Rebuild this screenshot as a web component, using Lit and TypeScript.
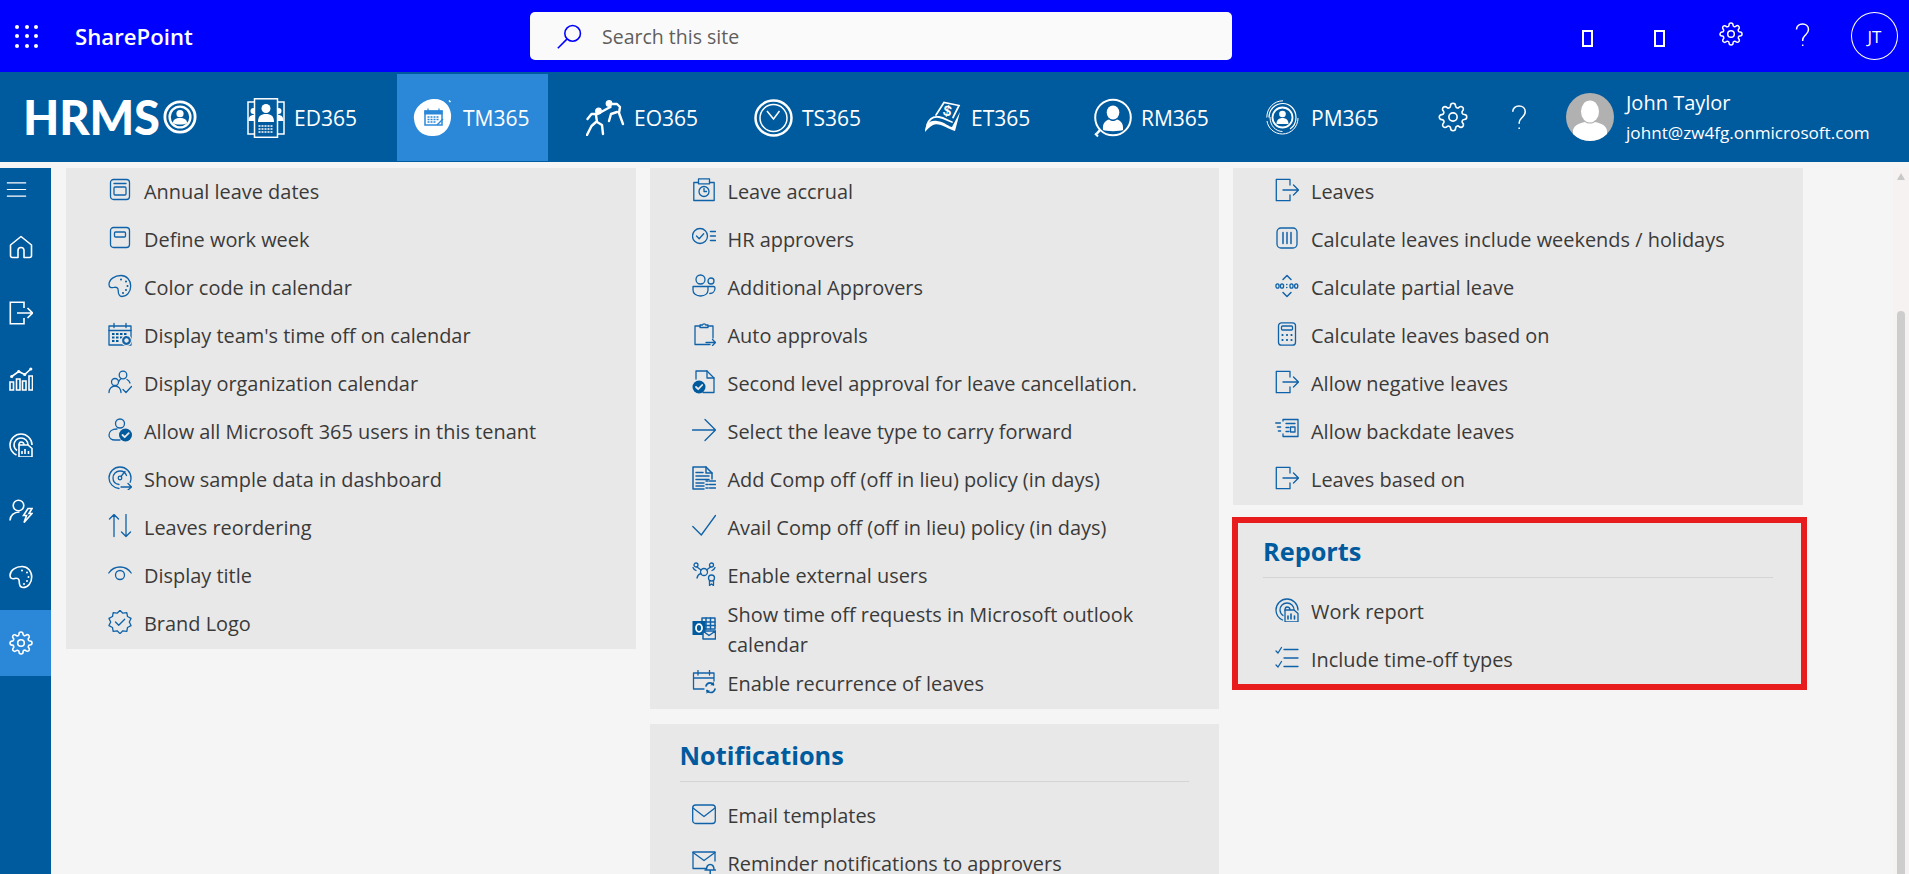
import { LitElement, html, css, svg } from "lit";
import { customElement } from "lit/decorators.js";

const GEAR = "M19.4 15a1.65 1.65 0 0 0 .33 1.82l.06.06a2 2 0 0 1 0 2.83 2 2 0 0 1-2.83 0l-.06-.06a1.65 1.65 0 0 0-1.82-.33 1.65 1.65 0 0 0-1 1.51V21a2 2 0 0 1-2 2 2 2 0 0 1-2-2v-.09A1.65 1.65 0 0 0 9 19.4a1.65 1.65 0 0 0-1.82.33l-.06.06a2 2 0 0 1-2.83 0 2 2 0 0 1 0-2.83l.06-.06a1.65 1.65 0 0 0 .33-1.82 1.65 1.65 0 0 0-1.51-1H3a2 2 0 0 1-2-2 2 2 0 0 1 2-2h.09A1.65 1.65 0 0 0 4.6 9a1.65 1.65 0 0 0-.33-1.82l-.06-.06a2 2 0 0 1 0-2.83 2 2 0 0 1 2.83 0l.06.06a1.65 1.65 0 0 0 1.82.33H9a1.65 1.65 0 0 0 1-1.51V3a2 2 0 0 1 2-2 2 2 0 0 1 2 2v.09a1.65 1.65 0 0 0 1 1.51 1.65 1.65 0 0 0 1.82-.33l.06-.06a2 2 0 0 1 2.83 0 2 2 0 0 1 0 2.83l-.06.06a1.65 1.65 0 0 0-.33 1.82V9a1.65 1.65 0 0 0 1.51 1H21a2 2 0 0 1 2 2 2 2 0 0 1-2 2h-.09a1.65 1.65 0 0 0-1.51 1z";
const PALETTE = "M13 1.5C6.5 1.5 1 5.5 1 10.5c0 3 2.5 3.6 4.6 3 2.6-.7 4.6.2 4.6 2.8 0 3.2.6 6.2 3.8 6.2 5 0 8.7-4.7 8.7-10.5C22.700 6 18.500 1.500 13 1.500z";

const badgePath = (() => {
  const pts: string[] = [];
  const n = 10;
  for (let i = 0; i < n * 2; i++) {
    const r = i % 2 ? 9.3 : 11.6;
    const a = (Math.PI * i) / n - Math.PI / 2;
    pts.push(`${(12 + r * Math.cos(a)).toFixed(2)} ${(12 + r * Math.sin(a)).toFixed(2)}`);
  }
  return "M" + pts.join("L") + "z";
})();

const ICONS: Record<string, any> = {
  annual: svg`<rect x="2.500" y="1.500" width="19" height="20" rx="3"/><path d="M6 5.500h12"/><rect x="6" y="9" width="12" height="8" rx="1"/>`,
  workweek: svg`<rect x="2.500" y="1.500" width="19" height="20" rx="3"/><rect x="6.500" y="6" width="11" height="5" rx="1"/>`,
  palette: svg`<path d="${PALETTE}"/><g class="f"><circle cx="13" cy="5.500" r="1"/><circle cx="18" cy="7.500" r="1"/><circle cx="19.500" cy="12" r="1"/><circle cx="18" cy="16" r="1"/><circle cx="15" cy="19" r="1"/></g>`,
  teamcal: svg`<path d="M1 4H23V23H1z"/><path d="M1 8.500h22M6 1.500v4M18 1.500v4"/><g class="f"><rect x="4" y="11" width="2.500" height="2"/><rect x="8" y="11" width="2.500" height="2"/><rect x="12" y="11" width="2.500" height="2"/><rect x="16" y="11" width="2.500" height="2"/><rect x="4" y="14.500" width="2.500" height="2"/><rect x="8" y="14.500" width="2.500" height="2"/><rect x="12" y="14.500" width="2.500" height="2"/><rect x="4" y="18" width="2.500" height="2"/><rect x="8" y="18" width="2.500" height="2"/></g><circle cx="18.500" cy="18.500" r="5.500" class="bgf" stroke="none"/><circle cx="18.500" cy="18.500" r="3.300" stroke-width="2.200" stroke-dasharray="1.800 .8"/>`,
  orgcal: svg`<circle cx="15" cy="5" r="3.800"/><path d="M12.800 9c-1 .6-1.500 1.500-1.800 2.300"/><circle cx="7" cy="12" r="3.500"/><path d="M1 22.500c0-3.500 2.500-6.500 6-6.500s6 3 6 6.500"/><path d="M15 19.500l3 3 5.500-6"/><path d="M19 9.500c1.500.7 2.500 2 3 3.500"/>`,
  allow365: svg`<circle cx="12" cy="5.500" r="4.500"/><path d="M9 11C4 11 1 13.500 1 17c0 3 2.500 5 6 5h5"/><circle cx="17.500" cy="17" r="6.500" class="f" stroke="none"/><path d="M14.500 17l2.200 2.200 4-4" stroke="#e8e8e8" stroke-width="1.800"/>`,
  gauge: svg`<path d="M11 22.500C5.500 22 1 17.500 1 12 1 6 6 1 12 1s11 5 11 11c0 1.500-.3 3-.8 4.300"/><path d="M11 18.500C7.500 18 5 15.500 5 12c0-4 3-7 7-7 3 0 5.500 1.800 6.500 4.500"/><circle cx="12" cy="12" r="1.800"/><path d="M13 10.500l4-5"/><path d="M13 21h10.500M20 17.500l3.500 3.500-3.500 3"/>`,
  reorder: svg`<path d="M6 22.500V.5M1.500 5L6 .5 10.500 5M18 .5v22M13.500 18l4.500 4.500 4.500-4.500"/>`,
  eye: svg`<path d="M.8 11C3.500 7 7.500 5 12 5s8.500 2 11.200 6"/><circle cx="12" cy="13" r="4.500"/>`,
  brand: svg`<path d="${badgePath}" stroke-linejoin="round"/><path d="M7.500 12l3.200 3.200 6-6"/>`,
  accrual: svg`<path d="M6.500 4.500H1.800v18h20.400v-18H17.500"/><rect x="6.500" y=".8" width="11" height="5"/><circle cx="12" cy="13.500" r="5"/><path d="M12 10.500v3h2.500"/>`,
  hr: svg`<circle cx="8" cy="10" r="7.500"/><path d="M4.500 10l2.700 2.700 4.500-5"/><path d="M18.500 5.500h5M18.500 10h5M18.500 14.500h5" stroke-width="1.500"/>`,
  additional: svg`<circle cx="8.500" cy="5.500" r="4.500"/><circle cx="19" cy="7" r="3"/><path d="M1 12.500h15v3.500c0 3.500-3 6-7.500 6S1 19.500 1 16z"/><path d="M16 12.500h5.500c1 0 1.500.5 1.500 1.500 0 3-2 5.500-5.200 5.500"/>`,
  auto: svg`<path d="M8 4H3v18.500h15"/><path d="M16 4h5v12"/><path d="M8 5.500V3h2.500c.2-1.500 3-1.500 3.200 0H16v2.500z"/><path d="M14 20.500h9.500M20.500 17.500l3 3-3 3"/>`,
  second: svg`<path d="M4 9V1h11l7 7v14.500H11"/><path d="M15 1v7h7"/><circle cx="7" cy="17" r="6.500" class="f" stroke="none"/><path d="M4 17l2.200 2.200 4-4.200" stroke="#e8e8e8" stroke-width="1.800"/>`,
  arrow: svg`<path d="M.5 12h23M13 1.500L23.500 12 13 22.500"/>`,
  addcomp: svg`<path d="M1 1h13l6 6v6M12 23H1V1" stroke-width="1.500"/><path d="M14 1v6h6M4 6.500h7M4 10h13M4 13.500h13M4 17h8M4 20h8" stroke-width="1.500"/><path d="M14 15h2M14 18.500h2M14 22h2M17.500 15h6M17.500 18.500h6M17.500 22h6" stroke-width="1.500"/>`,
  check: svg`<path d="M.8 12.500L9.300 21 23.500 1.500"/>`,
  external: svg`<circle cx="4" cy="3" r="2"/><circle cx="19.500" cy="3" r="2"/><circle cx="12" cy="10" r="3.500"/><path d="M5 5l4 3M18.500 5l-4 3M5 16c.5-2.500 2-4 4-4.500M1 5.500c.5 1.500 1.500 2.500 3 3M23 5.500c-.5 1.500-1.500 2.500-3 3"/><circle cx="19.500" cy="16" r="3"/><path d="M17.500 19v4.500l2-1.500 2 1.500V19"/>`,
  outlook: svg`<path d="M10 2h13v11H10z" stroke-width="1.500"/><path d="M10 6h13M10 9.500h13M14 2v11M18.500 2v11" stroke-width="1.500"/><rect x=".5" y="5" width="13" height="14" class="f" stroke="none"/><ellipse cx="7" cy="12" rx="3" ry="3.800" stroke="#fff" stroke-width="1.800"/><path d="M11 15h12.500v8H11zM11 15l6 4.500 6.500-4.500" class="bgf" stroke-width="1.500"/>`,
  recur: svg`<path d="M12 19H1.500V3h20.500v8M1.500 8H22M6 .5V5M17.500 .5V5"/><path d="M14 16c.5-2 2-3.200 4-3.200 1.500 0 2.700.7 3.500 2M23 19c-.5 2-2.500 3.500-4.500 3.500-1.500 0-2.800-.7-3.500-2" stroke-width="1.700"/><path d="M21.800 11.800v3.400h-3.400zM14.500 23.800v-3.400h3.400z" class="f" stroke="none"/>`,
  email: svg`<rect x=".7" y="3" width="22.600" height="18.500" rx="3"/><path d="M1 6l11 8.500L23 6"/>`,
  reminder: svg`<path d="M14 18.500H1V2h22v9"/><path d="M1 2.500l11 8 11-8"/><path d="M14.500 20c0-3.500 1.500-5.500 3.700-5.500S22 16.500 22 20zM13 20h10.500M18.200 20.500v3" stroke-width="1.500"/>`,
  exit: svg`<path d="M15 7V1.300H1.300v21.400H15V17"/><path d="M8 12h15.500M18.500 7l5 5-5 5"/>`,
  columns: svg`<rect x="2" y="2" width="20" height="20" rx="4"/><path d="M8 6.500v11M12 6.500v11M16 6.500v11" stroke-width="1.500"/>`,
  partial: svg`<path d="M8 5.500l4-4 4 4M8 18.500l4 4 4-4" stroke-width="1.500"/><ellipse cx="2.500" cy="12" rx="1.600" ry="2.200"/><ellipse cx="7" cy="12" rx="1.600" ry="2.200"/><ellipse cx="16.500" cy="12" rx="1.600" ry="2.200"/><ellipse cx="21.200" cy="12" rx="1.600" ry="2.200"/><g class="f"><circle cx="11.800" cy="10.500" r=".8"/><circle cx="11.800" cy="13.500" r=".8"/></g>`,
  calc: svg`<rect x="3.500" y=".8" width="17" height="22.400" rx="3"/><rect x="6.500" y="4" width="11" height="4" rx="1"/><g class="f"><circle cx="7.500" cy="13" r="1.100"/><circle cx="12" cy="13" r="1.100"/><circle cx="16.500" cy="13" r="1.100"/><circle cx="7.500" cy="18" r="1.100"/><circle cx="12" cy="18" r="1.100"/><circle cx="16.500" cy="18" r="1.100"/></g>`,
  backdate: svg`<path d="M8 3V1.500h15v17H8V16"/><path d="M11 5.500h9M11 9.500h3M11 13.500h3" stroke-width="1.300"/><rect x="15.500" y="9" width="4.500" height="5"/><path d="M.8 5h4.500M2.500 9h3M3.500 13h2" stroke-width="1.600"/>`,
  report: svg`<path d="M7.500 22C3.500 20 1 16 1 12 1 6 6 1 12 1s11 5 11 11"/><path d="M8 17.500C6 16 5 14 5 12c0-4 3-7 7-7s7 3 7 7"/><path d="M10 12.500c0-2 .5-3.500 2-3.500s3 1 3 3"/><path d="M10 12h9l4 3.500V24H10z" class="bgf"/><path d="M13 21v-3M16 21v-5M19.500 21v-3" stroke-width="1.600"/>`,
  types: svg`<path d="M1 5l2 2 3.500-5.500M1 19l2 2 3.500-5.500"/><path d="M9 3.500h14M9 12h14M9 20.500h14"/>`,
  menu: svg`<path d="M1 4.500h22M1 12h22M1 19.500h22"/>`,
  home: svg`<path d="M12 1.500L1.500 10v10.500A2 2 0 0 0 3.500 22.500H9v-7a3 3 0 0 1 6 0v7h5.500a2 2 0 0 0 2-2V10z" stroke-linejoin="round"/>`,
  chart: svg`<path d="M1 23h3.500v-8H1zM7.500 23H11V12H7.500zM13.500 23H17V14h-3.500zM20 23h3.500V9H20z"/><path d="M2.700 9.500l7-5 6 3L21.800 2"/><g class="f"><circle cx="2.700" cy="9.500" r="1.600"/><circle cx="9.700" cy="4.500" r="1.600"/><circle cx="15.700" cy="7.500" r="1.600"/><circle cx="21.800" cy="2" r="1.600"/></g>`,
  userbolt: svg`<circle cx="9.500" cy="6.500" r="5.300"/><path d="M1 21.500C1 16.500 5 13 10.500 13"/><path d="M19 9.500h4l-3 5h3l-8 9 2.500-7h-3z"/>`,
  gear: svg`<circle cx="12" cy="12" r="3.300"/><path d="${GEAR}"/>`,
  search: svg`<circle cx="15" cy="9" r="7.500"/><path d="M9.500 14.500L.8 23.300"/>`,
};

const ic = (name: string, cls = "icon") =>
  html`<svg class="${cls}" viewBox="0 0 24 24" aria-hidden="true">${ICONS[name]}</svg>`;

const questionMark = (cls: string) =>
  html`<svg class="${cls}" viewBox="0 0 15 24" aria-hidden="true"><path d="M1.500 6.500C1.500 3.200 4 1 7.500 1s6 2.200 6 5.500c0 3-2 4.500-3.500 6-1.300 1.300-2.300 2.500-2.300 4.500v1"/><path d="M7.700 21.500v1.500"/></svg>`;

const NAV_ICONS: Record<string, any> = {
  ed: html`<svg class="nav-ic" width="38" height="40" viewBox="0 0 38 40"><g fill="none" stroke="#fff" stroke-width="1.500"><rect x="1" y="4" width="36" height="32"/></g><g fill="#fff"><circle cx="6.500" cy="13" r="3"/><path d="M1.500 23c0-4 2-6 5-6s5 2 5 6zM26.500 23c0-4 2-6 5-6s5 2 5 6z"/><circle cx="31.500" cy="13" r="3"/></g><rect x="7.500" y=".8" width="23" height="38.500" fill="#005a9e" stroke="#fff" stroke-width="1.500"/><circle cx="19" cy="10.500" r="4.500" fill="#fff"/><path d="M11 24c0-6 3-8 8-8s8 2 8 8z" fill="#fff"/><path d="M11.500 28h15M11.500 31h15M11.500 34h15" stroke="#fff" stroke-width="1.500" stroke-dasharray="2 1"/></svg>`,
  tm: html`<svg class="nav-ic" width="41" height="40" viewBox="0 0 41 40"><path d="M20 1c10-1 17 6 18 15 1 11-6 22-17 22C10 39 2 32 1 21 0 11 9 2 20 1z" fill="#fff"/><path d="M36 2.500l1.500 1.500" stroke="#fff" stroke-width="1.500"/><rect x="12" y="13" width="17" height="14" fill="none" stroke="#2b88d8" stroke-width="1.500"/><path d="M12 13h17v3H12zM15 10.500v4M26 10.500v4" fill="#2b88d8" stroke="#2b88d8" stroke-width="1.200"/><path d="M14.500 19h12M14.500 21.500h12M14.500 24h8" stroke="#2b88d8" stroke-width="1.500" stroke-dasharray="2 1"/><path d="M24 27l6-6" stroke="#2b88d8" stroke-width="1.500"/></svg>`,
  eo: html`<svg class="nav-ic" width="39" height="36" viewBox="0 0 39 36"><g fill="#fff" stroke="#fff" stroke-width="1.200" stroke-linecap="round" stroke-linejoin="round"><circle cx="12.500" cy="11" r="2.800"/><circle cx="23" cy="3.500" r="2.800"/></g><g fill="none" stroke="#fff" stroke-width="2.400" stroke-linecap="round" stroke-linejoin="round"><path d="M1.500 19l4-5h6l10-5.500 3-1.500"/><path d="M10 15l1 7 5 3 1 9M10 22L5.500 26 1 35"/><path d="M25 4h6l3 3-1 6 4 11"/><path d="M31 12l-6 2-2 7"/></g></svg>`,
  ts: html`<svg class="nav-ic" width="39" height="38" viewBox="0 0 39 38"><g fill="none" stroke="#fff"><ellipse cx="19.500" cy="19" rx="18" ry="17.500" stroke-width="2.500"/><ellipse cx="19.500" cy="19" rx="13.500" ry="13.500" stroke-width="1.500"/><path d="M13 12l6.500 8 6-8" stroke-width="1.500"/></g></svg>`,
  et: html`<svg class="nav-ic" width="38" height="33" viewBox="0 0 38 33"><g fill="none" stroke="#fff" stroke-linecap="round"><path d="M12 14l8-12.500 15 3-6 12" stroke-width="1.700"/><path d="M1 31c0-7 4-12 12-11s12 6 15 6l8-15-5 19C24 28 15 21 9 24c-4 2-6 5-8 7z" fill="#fff" stroke-width="0"/><path d="M3 24c2-6 6-9 12-8 6 1 9 4 13 5" stroke-width="1.800"/></g><text x="23" y="15" font-family="Liberation Sans" font-weight="700" font-size="15" fill="#fff" text-anchor="middle" transform="rotate(12 23 12)">$</text></svg>`,
  rm: html`<svg class="nav-ic" width="39" height="40" viewBox="0 0 39 40"><circle cx="20" cy="19.500" r="17.800" fill="none" stroke="#fff" stroke-width="2"/><path d="M7 32l-3.500 4" stroke="#fff" stroke-width="2.500"/><path d="M2 35.500l3 3" stroke="#fff" stroke-width="2"/><ellipse cx="20" cy="14.500" rx="6.300" ry="7" fill="#fff"/><path d="M10 32c-.5-7 2-9 6-10.500 3 2 5 2 8 0 4 1.500 6.500 3.500 6 10.500-3 1.500-17 1.500-20 0z" fill="#fff"/></svg>`,
  pm: html`<svg class="nav-ic" width="36" height="35" viewBox="0 0 36 35"><g fill="none" stroke="#fff"><circle cx="16.500" cy="17.500" r="10" stroke-width="1.800"/><path d="M3 17.500C3 9.500 9 3.500 17 3.500c7 0 13 6 13 14 0 5-2 9-6 11.500" stroke-width="1.200"/><path d="M.8 17.500C.8 8 8 .8 17 .8M32 18c0 9-7 16-15.500 16C8 34 2 28 1 21M4 17c0 9 6 14.500 12.500 14.500" stroke-width="1"/></g><circle cx="16.500" cy="14" r="3.300" fill="#fff"/><path d="M10.500 24c0-4 2.500-6 6-6s6 2 6 6z" fill="#fff"/></svg>`,
};

const TABS = [
  ["ed", "ED365", false],
  ["tm", "TM365", true],
  ["eo", "EO365", false],
  ["ts", "TS365", false],
  ["et", "ET365", false],
  ["rm", "RM365", false],
  ["pm", "PM365", false],
] as [string, string, boolean][];

type Row = [string, string];
const COL1: Row[] = [
  ["annual", "Annual leave dates"],
  ["workweek", "Define work week"],
  ["palette", "Color code in calendar"],
  ["teamcal", "Display team's time off on calendar"],
  ["orgcal", "Display organization calendar"],
  ["allow365", "Allow all Microsoft 365 users in this tenant"],
  ["gauge", "Show sample data in dashboard"],
  ["reorder", "Leaves reordering"],
  ["eye", "Display title"],
  ["brand", "Brand Logo"],
];
const COL2: Row[] = [
  ["accrual", "Leave accrual"],
  ["hr", "HR approvers"],
  ["additional", "Additional Approvers"],
  ["auto", "Auto approvals"],
  ["second", "Second level approval for leave cancellation."],
  ["arrow", "Select the leave type to carry forward"],
  ["addcomp", "Add Comp off (off in lieu) policy (in days)"],
  ["check", "Avail Comp off (off in lieu) policy (in days)"],
  ["external", "Enable external users"],
  ["outlook", "Show time off requests in Microsoft outlook calendar"],
  ["recur", "Enable recurrence of leaves"],
];
const NOTIF: Row[] = [
  ["email", "Email templates"],
  ["reminder", "Reminder notifications to approvers"],
];
const COL3: Row[] = [
  ["exit", "Leaves"],
  ["columns", "Calculate leaves include weekends / holidays"],
  ["partial", "Calculate partial leave"],
  ["calc", "Calculate leaves based on"],
  ["exit", "Allow negative leaves"],
  ["backdate", "Allow backdate leaves"],
  ["exit", "Leaves based on"],
];
const REPORTS: Row[] = [
  ["report", "Work report"],
  ["types", "Include time-off types"],
];
const SIDE = ["home", "exit", "chart", "report", "userbolt", "palette", "gear"];

@customElement("app-root")
export class AppRoot extends LitElement {
  static styles = css`
    :host {
      display: block;
      width: 1909px;
      height: 874px;
      overflow: hidden;
      background: #f5f5f5;
      font-family: "Open Sans", "Noto Sans", sans-serif;
      color: #3b3a39;
    }
    svg { display: block; flex: none; }
    .suite {
      height: 72px;
      background: #0000ff;
      color: #fff;
      display: flex;
      align-items: center;
    }
    .waffle {
      display: grid;
      grid-template-columns: repeat(3, 4px);
      gap: 5.500px;
      margin-left: 15px;
      width: 23px;
    }
    .waffle i { width: 4px; height: 4px; border-radius: 50%; background: #fff; }
    .brand-name {
      margin-left: 37px;
      width: 455px;
      font-size: 22.200px;
      font-weight: 600;
    }
    .search {
      width: 702px;
      height: 48px;
      background: #fafafa;
      border-radius: 5px;
      display: flex;
      align-items: center;
      padding-left: 27px;
      box-sizing: border-box;
      gap: 20px;
      color: #605e5c;
      font-size: 19.500px;
    }
    .search svg { width: 25px; height: 25px; fill: none; stroke: #0000ff; stroke-width: 1.500; }
    .suite-right {
      margin-left: 350px;
      display: flex;
      align-items: center;
      height: 100%;
    }
    .tofu { width: 11px; height: 17px; border: 2px solid #fff; box-sizing: border-box; margin-top: 4px; }
    .tofu.b { margin-left: 61px; }
    .suite-gear { width: 24px; height: 24px; fill: none; stroke: #fff; stroke-width: 1.500; margin-left: 54px; margin-top: -4px; }
    .suite-q { width: 15px; height: 24px; margin-left: 52px; margin-top: -3px; fill: none; stroke: #fff; stroke-width: 1.500; }
    .me {
      margin-left: 41px;
      width: 47px;
      height: 48px;
      border: 1px solid #fff;
      border-radius: 50%;
      box-sizing: border-box;
      display: flex;
      align-items: center;
      justify-content: center;
      font-size: 17px;
    }
    .app {
      height: 90px;
      background: #005a9e;
      color: #fff;
      display: flex;
      align-items: center;
    }
    .logo {
      margin-left: 23px;
      width: 208px;
      display: flex;
      align-items: center;
      gap: 3px;
      font-family: "Lato", sans-serif;
      font-weight: 900;
      font-size: 47px;
      letter-spacing: -0.200px;
      line-height: 1;
    }
    .logo svg { width: 34px; height: 34px; }
    .tabs {
      display: grid;
      grid-template-columns: 166px 173px 168px 170px 169px 173px 188px;
      height: 100%;
      align-items: center;
    }
    .tab {
      display: flex;
      align-items: center;
      gap: 9px;
      height: 87px;
      margin-top: 1px;
      padding: 0 19px 0 16px;
      width: fit-content;
      box-sizing: border-box;
      font-size: 21px;
    }
    .tab.on { background: #2b88d8; }
    .app-gear { width: 30px; height: 30px; fill: none; stroke: #fff; stroke-width: 1.300; }
    .app-q { margin-left: 43px; width: 16px; height: 25px; fill: none; stroke: #fff; stroke-width: 1.500; }
    .avatar { margin-left: 39px; width: 48px; height: 48px; }
    .who { margin-left: 12px; display: flex; flex-direction: column; gap: 5px; }
    .who b { font-weight: 400; font-size: 20px; line-height: 26px; }
    .who span { font-size: 17.150px; line-height: 24px; }
    .main {
      display: flex;
      margin-top: 6px;
      height: 706px;
    }
    .side {
      width: 51px;
      background: #005a9e;
      flex: none;
      display: flex;
      flex-direction: column;
      color: #fff;
    }
    .burger { height: 46px; display: flex; justify-content: center; padding: 11px 18px 0 0; box-sizing: border-box; }
    .burger svg { width: 21px; height: 21px; fill: none; stroke: #fff; stroke-width: 1.400; }
    .side-item { height: 66px; display: flex; align-items: center; justify-content: center; padding-right: 10px; }
    .side-item.on { background: #2b88d8; }
    .side-ic { width: 24px; height: 24px; fill: none; stroke: #fff; stroke-width: 1.600; }
    .side-ic .f { fill: #fff; stroke: none; }
    .side-ic .bgf { fill: #005a9e; }
    .content {
      flex: 1;
      display: grid;
      grid-template-columns: repeat(3, 569.500px);
      column-gap: 14px;
      padding-left: 15px;
      align-items: start;
      font-size: 19.930px;
    }
    .col { display: flex; flex-direction: column; gap: 15px; }
    .panel { background: #e8e8e8; padding: 0 30px 1px 0; position: relative; }
    .row {
      display: flex;
      align-items: center;
      gap: 12px;
      padding-left: 42px;
      min-height: 48px;
      line-height: 30px;
    }
    .icon {
      width: 24px;
      height: 24px;
      margin-top: -4px;
      fill: none;
      stroke: #0f62a8;
      stroke-width: 1.300;
      stroke-linecap: round;
      stroke-linejoin: round;
    }
    .icon .f { fill: #005a9e; stroke: none; }
    .icon .bgf { fill: #e8e8e8; }
    .row span { flex: 1; }
    .head {
      margin: 0 0 10px 30px;
      height: 58px;
      box-sizing: border-box;
      padding-top: 13px;
      border-bottom: 1px solid #d4d4d4;
      color: #005a9e;
      font-weight: 700;
      font-size: 25.300px;
      line-height: 36px;
    }
    .reports::after {
      content: "";
      position: absolute;
      top: -3px;
      left: -1px;
      right: -4px;
      bottom: -5px;
      border: 6px solid #e81c1c;
      pointer-events: none;
    }
    .scroll {
      width: 16px;
      flex: none;
      background: #f5f2f1;
      display: flex;
      flex-direction: column;
      align-items: center;
      padding-top: 5px;
      box-sizing: border-box;
    }
    .up { width: 0; height: 0; border: 4px solid transparent; border-top: 0; border-bottom: 7px solid #c8c8c8; }
    .thumb {
      width: 8px;
      margin-top: 131px;
      flex: 1;
      background: #cdcdcd;
      border-radius: 4px 4px 0 0;
    }
  `;

  private rows(rows: Row[]) {
    return rows.map(
      ([icon, label]) => html`<div class="row">${ic(icon)}<span>${label}</span></div>`
    );
  }

  render() {
    return html`
      <header class="suite">
        <div class="waffle">${Array.from({ length: 9 }, () => html`<i></i>`)}</div>
        <div class="brand-name">SharePoint</div>
        <div class="search">${ic("search", "")}<span>Search this site</span></div>
        <div class="suite-right">
          <div class="tofu"></div>
          <div class="tofu b"></div>
          ${ic("gear", "suite-gear")}
          ${questionMark("suite-q")}
          <div class="me">JT</div>
        </div>
      </header>
      <nav class="app">
        <div class="logo">
          <span>HRMS</span>
          <svg viewBox="0 0 36 36"><circle cx="18" cy="18" r="16" fill="none" stroke="#fff" stroke-width="3"/><circle cx="18" cy="18" r="11" fill="none" stroke="#fff" stroke-width="2.500"/><circle cx="18" cy="14.500" r="3.800" fill="#fff"/><path d="M10.500 24.500c0-4 3-5.500 7.500-5.500s7.500 1.500 7.500 5.500c-3 2-12 2-15 0z" fill="#fff"/></svg>
        </div>
        <div class="tabs">
          ${TABS.map(
            ([k, label, on]) => html`<div class="tab ${on ? "on" : ""}">${NAV_ICONS[k]}<span>${label}</span></div>`
          )}
        </div>
        ${ic("gear", "app-gear")}
        ${questionMark("app-q")}
        <svg class="avatar" viewBox="0 0 48 48">
          <defs><clipPath id="av"><circle cx="24" cy="24" r="24"/></clipPath></defs>
          <g clip-path="url(#av)">
            <rect width="48" height="48" fill="#b1b1b1"/>
            <ellipse cx="24" cy="18.500" rx="9" ry="11" fill="#fff"/>
            <path d="M7 48V38c0-5 6-8 12-9 3 2 7 2 10 0 6 1 12 4 12 9v10z" fill="#fff"/>
          </g>
        </svg>
        <div class="who"><b>John Taylor</b><span>johnt@zw4fg.onmicrosoft.com</span></div>
      </nav>
      <div class="main">
        <aside class="side">
          <div class="burger">${ic("menu", "")}</div>
          ${SIDE.map(
            (s) => html`<div class="side-item ${s === "gear" ? "on" : ""}">${ic(s, "side-ic")}</div>`
          )}
        </aside>
        <div class="content">
          <div class="col"><section class="panel">${this.rows(COL1)}</section></div>
          <div class="col">
            <section class="panel">${this.rows(COL2)}</section>
            <section class="panel">
              <div class="head">Notifications</div>
              ${this.rows(NOTIF)}
            </section>
          </div>
          <div class="col">
            <section class="panel">${this.rows(COL3)}</section>
            <section class="panel reports">
              <div class="head">Reports</div>
              ${this.rows(REPORTS)}
            </section>
          </div>
        </div>
        <div class="scroll"><div class="up"></div><div class="thumb"></div></div>
      </div>
    `;
  }
}
